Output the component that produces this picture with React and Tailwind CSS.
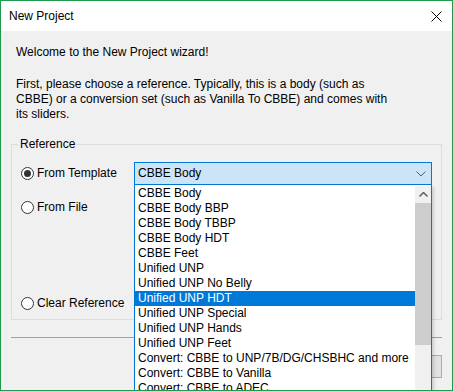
import React from "react";

const items = [
  "CBBE Body",
  "CBBE Body BBP",
  "CBBE Body TBBP",
  "CBBE Body HDT",
  "CBBE Feet",
  "Unified UNP",
  "Unified UNP No Belly",
  "Unified UNP HDT",
  "Unified UNP Special",
  "Unified UNP Hands",
  "Unified UNP Feet",
  "Convert: CBBE to UNP/7B/DG/CHSBHC and more",
  "Convert: CBBE to Vanilla",
  "Convert: CBBE to ADEC",
];

const Radio = ({ checked }) => (
  <span className="w-[13px] h-[13px] rounded-full border border-[#333] bg-white flex items-center justify-center shrink-0">
    {checked && <span className="w-[7px] h-[7px] rounded-full bg-[#333]" />}
  </span>
);

const App = () => {
  return (
    <div
      className="relative w-[453px] h-[391px] border border-[#1f9a4c] bg-[#f0f0f0] flex flex-col overflow-hidden text-[12px] leading-[15px] text-black"
      style={{ fontFamily: '"Liberation Sans", Arial, sans-serif' }}
    >
      {/* title bar */}
      <div className="h-[30px] bg-white flex items-center justify-between pl-[8px] pr-[9px] shrink-0">
        <span>New Project</span>
        <svg width="11" height="11" viewBox="0 0 11 11" className="mr-[1px]">
          <path d="M0.5 0.5 L10.5 10.5 M10.5 0.5 L0.5 10.5" stroke="#000" strokeWidth="1" />
        </svg>
      </div>

      {/* body */}
      <div className="flex-1 px-[10px] pt-[14px]">
        <div className="px-[5px]">
          <p>Welcome to the New Project wizard!</p>
          <p className="mt-[17px]">
            First, please choose a reference. Typically, this is a body (such as
            <br />
            CBBE) or a conversion set (such as Vanilla To CBBE) and comes with
            <br />
            its sliders.
          </p>
        </div>

        {/* group box */}
        <div className="relative mt-[22px] h-[176px] w-[431px] border border-[#dcdcdc]">
          <span className="absolute -top-[8px] left-[6px] bg-[#f0f0f0] px-[2px]">Reference</span>

          <div className="flex items-center h-[23px] mt-[17px] pl-[9px]">
            <div className="flex items-center gap-[3px] w-[113px]">
              <Radio checked />
              <span>From Template</span>
            </div>
            <div className="w-[298px] h-[23px] border border-[#0078d7] bg-[#cce4f7] flex items-center justify-between pl-[3px] pr-[5px]">
              <span>CBBE Body</span>
              <svg width="10" height="6" viewBox="0 0 10 6">
                <path d="M0.5 0.5 L5 5 L9.5 0.5" fill="none" stroke="#606060" strokeWidth="1" />
              </svg>
            </div>
          </div>

          <div className="flex items-center h-[23px] mt-[11px] pl-[9px] gap-[3px]">
            <Radio />
            <span>From File</span>
          </div>

          <div className="flex items-center h-[23px] mt-[73px] pl-[9px] gap-[3px]">
            <Radio />
            <span>Clear Reference</span>
          </div>
        </div>

        {/* separator */}
        <div className="mt-[17px] w-[431px] h-px bg-[#a0a0a0]" />

        {/* button hidden behind the list */}
        <div className="flex justify-end w-[431px] mt-[17px]">
          <div className="w-[75px] h-[23px] border border-[#adadad] bg-[#e1e1e1]" />
        </div>
      </div>

      {/* open dropdown list */}
      <div className="absolute left-[133px] top-[184px] w-[298px] h-[220px] bg-white border-x border-b border-[#0078d7] flex pt-px shadow-[2px_2px_3px_rgba(0,0,0,0.15)]">
        <ul className="flex-1">
          {items.map((item, i) => (
            <li
              key={item}
              className={
                i === 7
                  ? "h-[15px] pl-[3px] bg-[#0078d7] text-white whitespace-nowrap"
                  : "h-[15px] pl-[3px] whitespace-nowrap"
              }
            >
              {item}
            </li>
          ))}
        </ul>
        <div className="w-[16px] bg-[#f0f0f0] flex flex-col">
          <div className="h-[17px] flex items-center justify-center">
            <svg width="9" height="5" viewBox="0 0 9 5">
              <path d="M0.5 4.5 L4.5 0.5 L8.5 4.5" fill="none" stroke="#606060" strokeWidth="1.5" />
            </svg>
          </div>
          <div className="h-[142px] bg-[#cdcdcd]" />
        </div>
      </div>
    </div>
  );
};

export default App;
